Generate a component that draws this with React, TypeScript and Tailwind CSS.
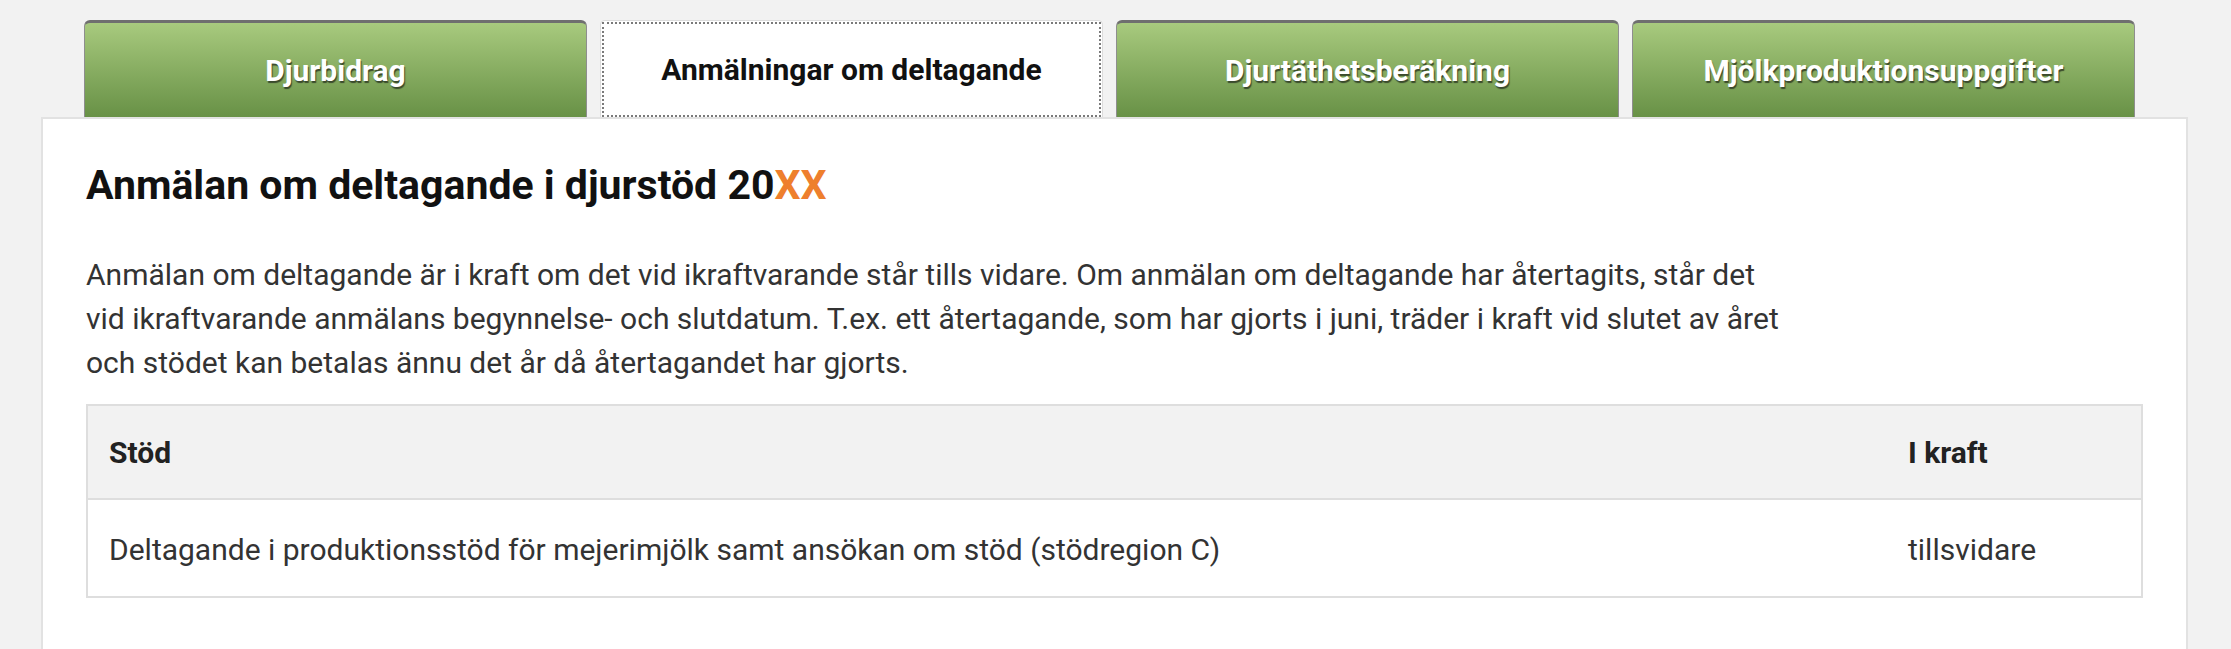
import React from "react";

const tabs = [
  { label: "Djurbidrag", active: false },
  { label: "Anmälningar om deltagande", active: true },
  { label: "Djurtäthetsberäkning", active: false },
  { label: "Mjölkproduktionsuppgifter", active: false },
];

export default function App() {
  return (
    <div className="h-[649px] overflow-hidden bg-[#f2f2f2] font-['Roboto',sans-serif]">
      <div className="flex gap-[13px] pl-[84px] pt-[20px]">
        {tabs.map((t) =>
          t.active ? (
            <div
              key={t.label}
              className="flex h-[97px] w-[503px] items-center justify-center rounded-t-[5px] border border-b-0 border-[#dcdcdc] bg-white pt-[1px] px-[1px]"
            >
              <div className="flex h-full w-full items-center justify-center border-2 border-dotted border-[#7a7a7a]">
                <span className="text-[30px] font-bold text-[#111]">{t.label}</span>
              </div>
            </div>
          ) : (
            <div
              key={t.label}
              className="flex h-[97px] w-[503px] items-center justify-center rounded-t-[6px] border border-b-0 border-[#8e8e8e] border-t-[3px] border-t-[#6f6f6f] bg-gradient-to-b from-[#a8ca7e] to-[#689146]"
            >
              <span className="text-[30px] font-bold text-white [text-shadow:1px_2px_1px_#3a4a2c]">
                {t.label}
              </span>
            </div>
          )
        )}
      </div>
      <div className="ml-[41px] w-[2147px] border-2 border-[#e2e2e2] bg-white px-[43px] pt-[42px] pb-[60px]">
        <h1 className="text-[41px] font-bold leading-[48px] text-[#111]">
          Anmälan om deltagande i djurstöd 20<span className="text-[#ee7f2d]">XX</span>
        </h1>
        <p className="mt-[44px] max-w-[1715px] text-[30px] leading-[44px] text-[#333]">
          Anmälan om deltagande är i kraft om det vid ikraftvarande står tills vidare. Om anmälan om
          deltagande har återtagits, står det vid ikraftvarande anmälans begynnelse- och slutdatum.
          T.ex. ett återtagande, som har gjorts i juni, träder i kraft vid slutet av året och stödet
          kan betalas ännu det år då återtagandet har gjorts.
        </p>
        <div className="mt-[19px] border-2 border-[#dedede] text-[30px] leading-[44px] text-[#333]">
          <div className="flex border-b-2 border-[#dedede] bg-[#f2f2f2] font-bold text-[#222]">
            <div className="flex-1 pl-[21px] pt-[25px] pb-[23px]">Stöd</div>
            <div className="w-[254px] pl-[21px] pt-[25px] pb-[23px]">I kraft</div>
          </div>
          <div className="flex">
            <div className="flex-1 pl-[21px] pt-[28px] pb-[24px]">
              Deltagande i produktionsstöd för mejerimjölk samt ansökan om stöd (stödregion C)
            </div>
            <div className="w-[254px] pl-[21px] pt-[28px] pb-[24px]">tillsvidare</div>
          </div>
        </div>
      </div>
    </div>
  );
}
